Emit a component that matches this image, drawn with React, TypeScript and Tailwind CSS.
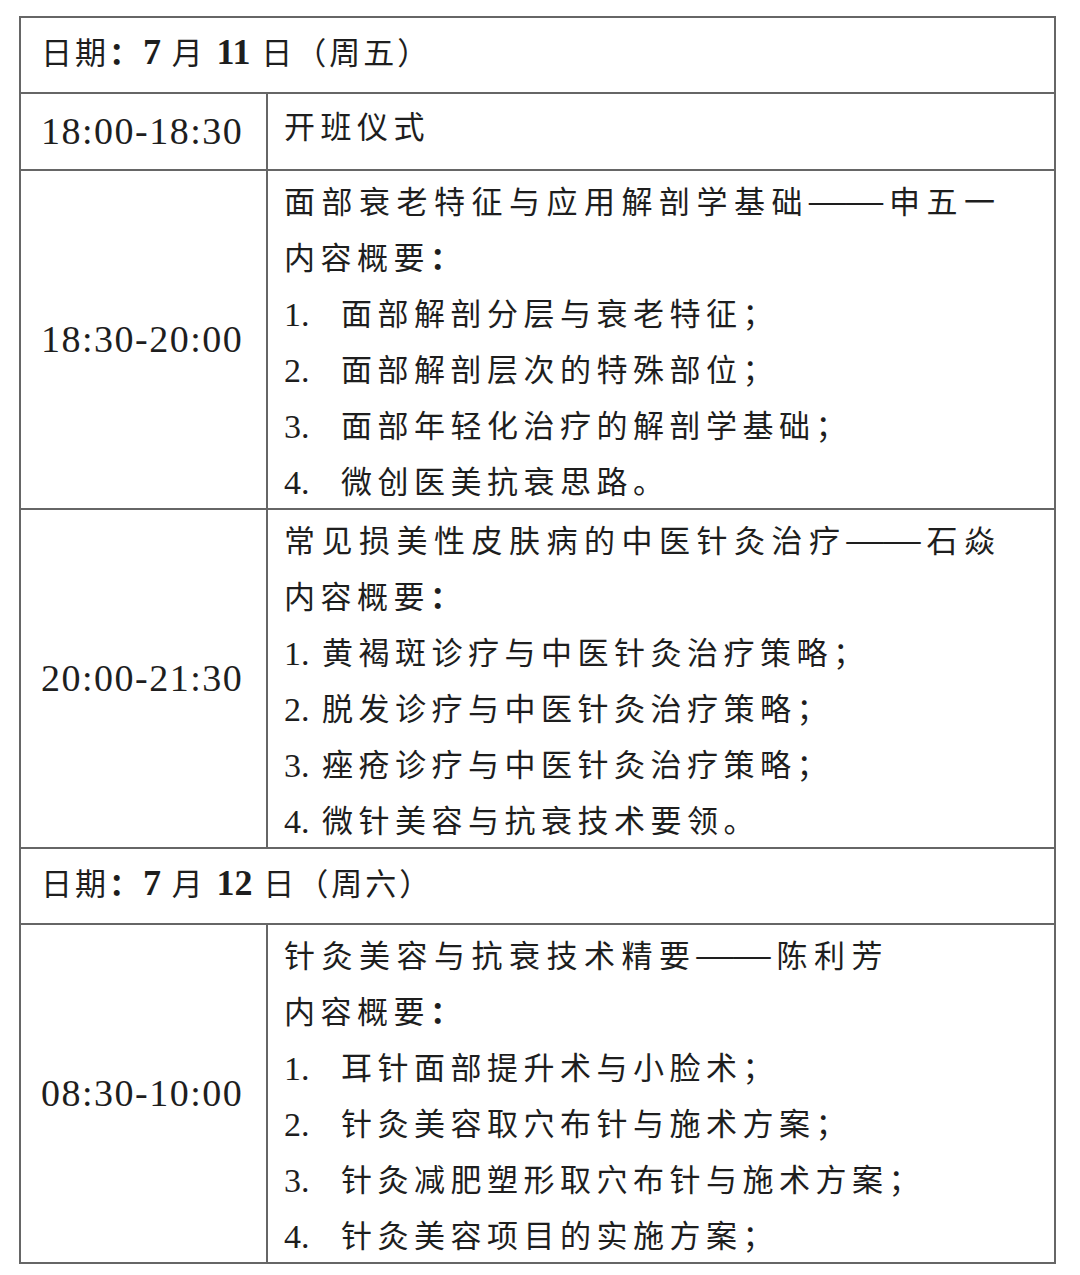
import React from "react";

type Section = {
  time: string;
  title: string;
  speaker: string;
  items: string[];
  numW: string;
};

const sections1: Section = {
  time: "18:30-20:00",
  title: "面部衰老特征与应用解剖学基础",
  speaker: "申五一",
  items: ["面部解剖分层与衰老特征；", "面部解剖层次的特殊部位；", "面部年轻化治疗的解剖学基础；", "微创医美抗衰思路。"],
  numW: "w-[57px]",
};

const sections2: Section = {
  time: "20:00-21:30",
  title: "常见损美性皮肤病的中医针灸治疗",
  speaker: "石焱",
  items: ["黄褐斑诊疗与中医针灸治疗策略；", "脱发诊疗与中医针灸治疗策略；", "痤疮诊疗与中医针灸治疗策略；", "微针美容与抗衰技术要领。"],
  numW: "w-[38px]",
};

const sections3: Section = {
  time: "08:30-10:00",
  title: "针灸美容与抗衰技术精要",
  speaker: "陈利芳",
  items: ["耳针面部提升术与小脸术；", "针灸美容取穴布针与施术方案；", "针灸减肥塑形取穴布针与施术方案；", "针灸美容项目的实施方案；"],
  numW: "w-[57px]",
};

function DateRow({ m, d, w }: { m: string; d: string; w: string }) {
  return (
    <tr>
      <td colSpan={2} className="h-[76px] border-2 border-[#666] pl-[20px] pb-[6px] align-middle">
        <span className="tracking-[3px]">日期</span>
        <b className="font-bold tracking-[3px]">：</b>
        <b className="font-bold text-[36px]">{m}</b>
        <span className="tracking-[3px]"> 月 </span>
        <b className="font-bold text-[36px]">{d}</b>
        <span className="tracking-[3px]"> 日（周{w}）</span>
      </td>
    </tr>
  );
}

function TimeCell({ t }: { t: string }) {
  return (
    <td className="w-[247px] border-2 border-[#666] pl-[20px] align-middle text-[38px] tracking-[1.5px] whitespace-nowrap">
      {t}
    </td>
  );
}

function SectionRow({ s }: { s: Section }) {
  return (
    <tr>
      <TimeCell t={s.time} />
      <td className="border-2 border-[#666] pl-[16px] pt-[4px] pb-0 align-top tracking-[5.5px]">
        <div className="h-[56px] leading-[56px] whitespace-nowrap tracking-[6.5px]">
          {s.title}
          <span className="text-[37px] leading-none tracking-[0px] mr-[6px]">——</span>
          {s.speaker}
        </div>
        <div className="h-[56px] leading-[56px] whitespace-nowrap">
          内容概要<b className="font-bold">：</b>
        </div>
        {s.items.map((it, i) => (
          <div
            key={i}
            className={`flex items-start leading-[56px] whitespace-nowrap ${i === s.items.length - 1 ? "h-[53px]" : "h-[56px]"}`}
          >
            <span className={`${s.numW} shrink-0 text-[34px] tracking-normal`}>{i + 1}.</span>
            <span>{it}</span>
          </div>
        ))}
      </td>
    </tr>
  );
}

export default function App() {
  return (
    <div className="w-[1080px] h-[1275px] bg-white pt-[16px] pl-[19px] text-[#1e1e1e] font-['Liberation_Serif','Noto_Sans_CJK_SC',serif] text-[31px]">
      <table className="w-[1037px] table-fixed border-collapse">
        <colgroup>
          <col className="w-[247px]" />
          <col />
        </colgroup>
        <tbody>
          <DateRow m="7" d="11" w="五" />
          <tr>
            <TimeCell t="18:00-18:30" />
            <td className="h-[77px] border-2 border-[#666] pl-[16px] pb-[6px] align-middle tracking-[5.5px]">开班仪式</td>
          </tr>
          <SectionRow s={sections1} />
          <SectionRow s={sections2} />
          <DateRow m="7" d="12" w="六" />
          <SectionRow s={sections3} />
        </tbody>
      </table>
    </div>
  );
}
